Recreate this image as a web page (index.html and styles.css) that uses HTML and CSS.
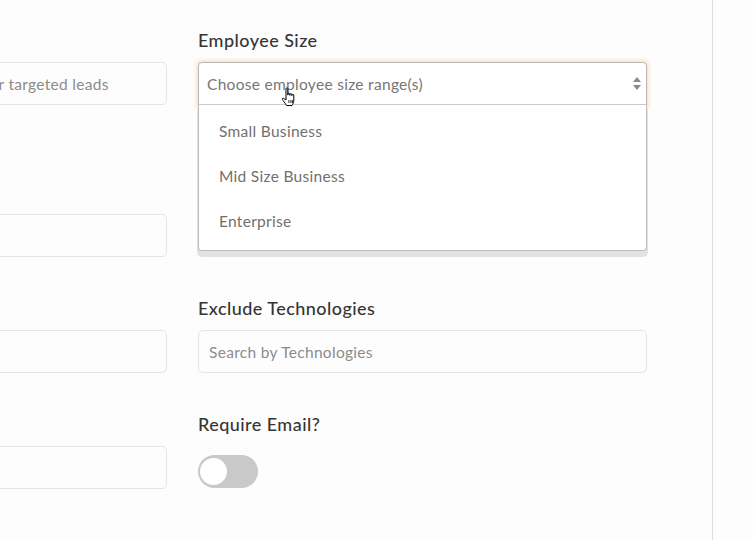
FILE: index.html
```html
<!DOCTYPE html>
<html>
<head>
<meta charset="utf-8">
<link rel="stylesheet" href="styles.css">
</head>
<body>
<div class="page">
  <div class="form">
    <div class="field">
      <label class="label">Keywords</label>
      <div class="input"><span class="ph">Enter keywords which describe all your targeted leads</span></div>
    </div>
    <div class="field">
      <label class="label">Employee Size</label>
      <div class="select-wrap">
        <div class="select">
          <span class="sel-text">Choose employee size range(s)</span>
          <svg class="arrows" width="8" height="13" viewBox="0 0 8 13"><path d="M4 0 L8 5 L0 5 Z M0 8 L8 8 L4 13 Z" fill="#8a8a8a"/></svg>
        </div>
        <div class="menu">
          <div class="opt">Small Business</div>
          <div class="opt">Mid Size Business</div>
          <div class="opt">Enterprise</div>
        </div>
        <svg class="cursor" width="18" height="20" viewBox="0 0 18 20">
          <path d="M5 1.5 C5 0.7 6.8 0.7 6.8 1.5 L6.8 8 L7 8 L7 6.8 C7 6 8.8 6 8.8 6.8 L8.8 8.3 L9 8.3 L9 7.3 C9 6.5 10.8 6.5 10.8 7.3 L10.8 8.6 L11 8.6 L11 8 C11 7.2 12.8 7.2 12.8 8 L12.8 13 C12.8 15.5 11.5 17.5 11 18.5 L5.5 18.5 C4.8 17 3.5 15.5 2 13.5 C1 12 1.2 10.8 2.4 11.2 L5 13 Z" fill="#fff" stroke="#000" stroke-width="1"/>
          <path d="M7.9 13 V16 M9.9 13 V16 M11.4 13 V16" stroke="#000" stroke-width="0.8"/>
        </svg>
      </div>
    </div>

    <div class="field spaced">
      <label class="label">Industry</label>
      <div class="input"></div>
    </div>
    <div class="field spaced">
      <label class="label">Location</label>
      <div class="input"></div>
    </div>

    <div class="field">
      <label class="label">Technologies</label>
      <div class="input"></div>
    </div>
    <div class="field">
      <label class="label">Exclude Technologies</label>
      <div class="input"><span class="ph">Search by Technologies</span></div>
    </div>

    <div class="field">
      <label class="label">Job Titles</label>
      <div class="input"></div>
    </div>
    <div class="field">
      <label class="label">Require Email?</label>
      <div class="toggle"><span class="knob"></span></div>
    </div>
  </div>
  <div class="divider"></div>
</div>
</body>
</html>
```
FILE: styles.css
```css
html, body {
  margin: 0;
  padding: 0;
  background: #fdfdfd;
  height: 100%;
  overflow: hidden;
}
body {
  font-family: Lato, "Open Sans", sans-serif;
}
.page {
  display: flex;
  height: 540px;
}
.form {
  margin-left: -282px;
  padding-top: 29px;
  display: grid;
  grid-template-columns: 449px 449px;
  column-gap: 31px;
  row-gap: 40px;
  align-content: start;
  flex: none;
}
.field {
  display: flex;
  flex-direction: column;
}
.field.spaced {
  margin-top: 36px;
}
.label {
  font-size: 18px;
  line-height: 22px;
  color: #353535;
  margin-bottom: 11px;
  font-weight: 500;
  letter-spacing: 0.45px;
}
.input {
  height: 41px;
  border: 1px solid #e4e4e4;
  border-radius: 5px;
  background: #fdfdfd;
  display: flex;
  align-items: center;
  padding: 0 10px;
  white-space: nowrap;
  overflow: hidden;
}
.ph {
  font-size: 15.5px;
  letter-spacing: 0.3px;
  color: #8c8c8c;
}
.select-wrap {
  position: relative;
}
.select {
  height: 41px;
  border: 1px solid #b9b9b9;
  border-radius: 4px 4px 0 0;
  background: #fff;
  box-shadow: 0 0 0 1px #fde6c8, 0 0 3px 3px #fdebd6;
  display: flex;
  align-items: center;
  justify-content: space-between;
  padding: 0 5px 0 8px;
}
.sel-text {
  font-size: 15.5px;
  letter-spacing: 0.3px;
  color: #767676;
}
.menu {
  position: absolute;
  left: 0;
  right: 0;
  top: 42px;
  background: #fff;
  border: 1px solid #bdbdbd;
  border-top: 1px solid #c8c8c8;
  border-radius: 0 0 4px 4px;
  box-shadow: 0 5px 0 1px #e2e2e2;
  padding: 4px 0 6px;
  z-index: 2;
}
.opt {
  height: 45px;
  line-height: 45px;
  padding-left: 20px;
  font-size: 15.5px;
  letter-spacing: 0.3px;
  color: #707070;
}
.cursor {
  position: absolute;
  left: 83px;
  top: 25px;
  z-index: 3;
}
.toggle {
  width: 60px;
  height: 33px;
  margin-top: 9px;
  border-radius: 17px;
  background: #c9c9c9;
  display: flex;
  align-items: center;
  padding-left: 2px;
  box-sizing: border-box;
}
.knob {
  width: 27px;
  height: 27px;
  border-radius: 50%;
  background: #fff;
}
.divider {
  margin-left: 65px;
  width: 1px;
  background: #dcdcdc;
  flex: none;
}
```
